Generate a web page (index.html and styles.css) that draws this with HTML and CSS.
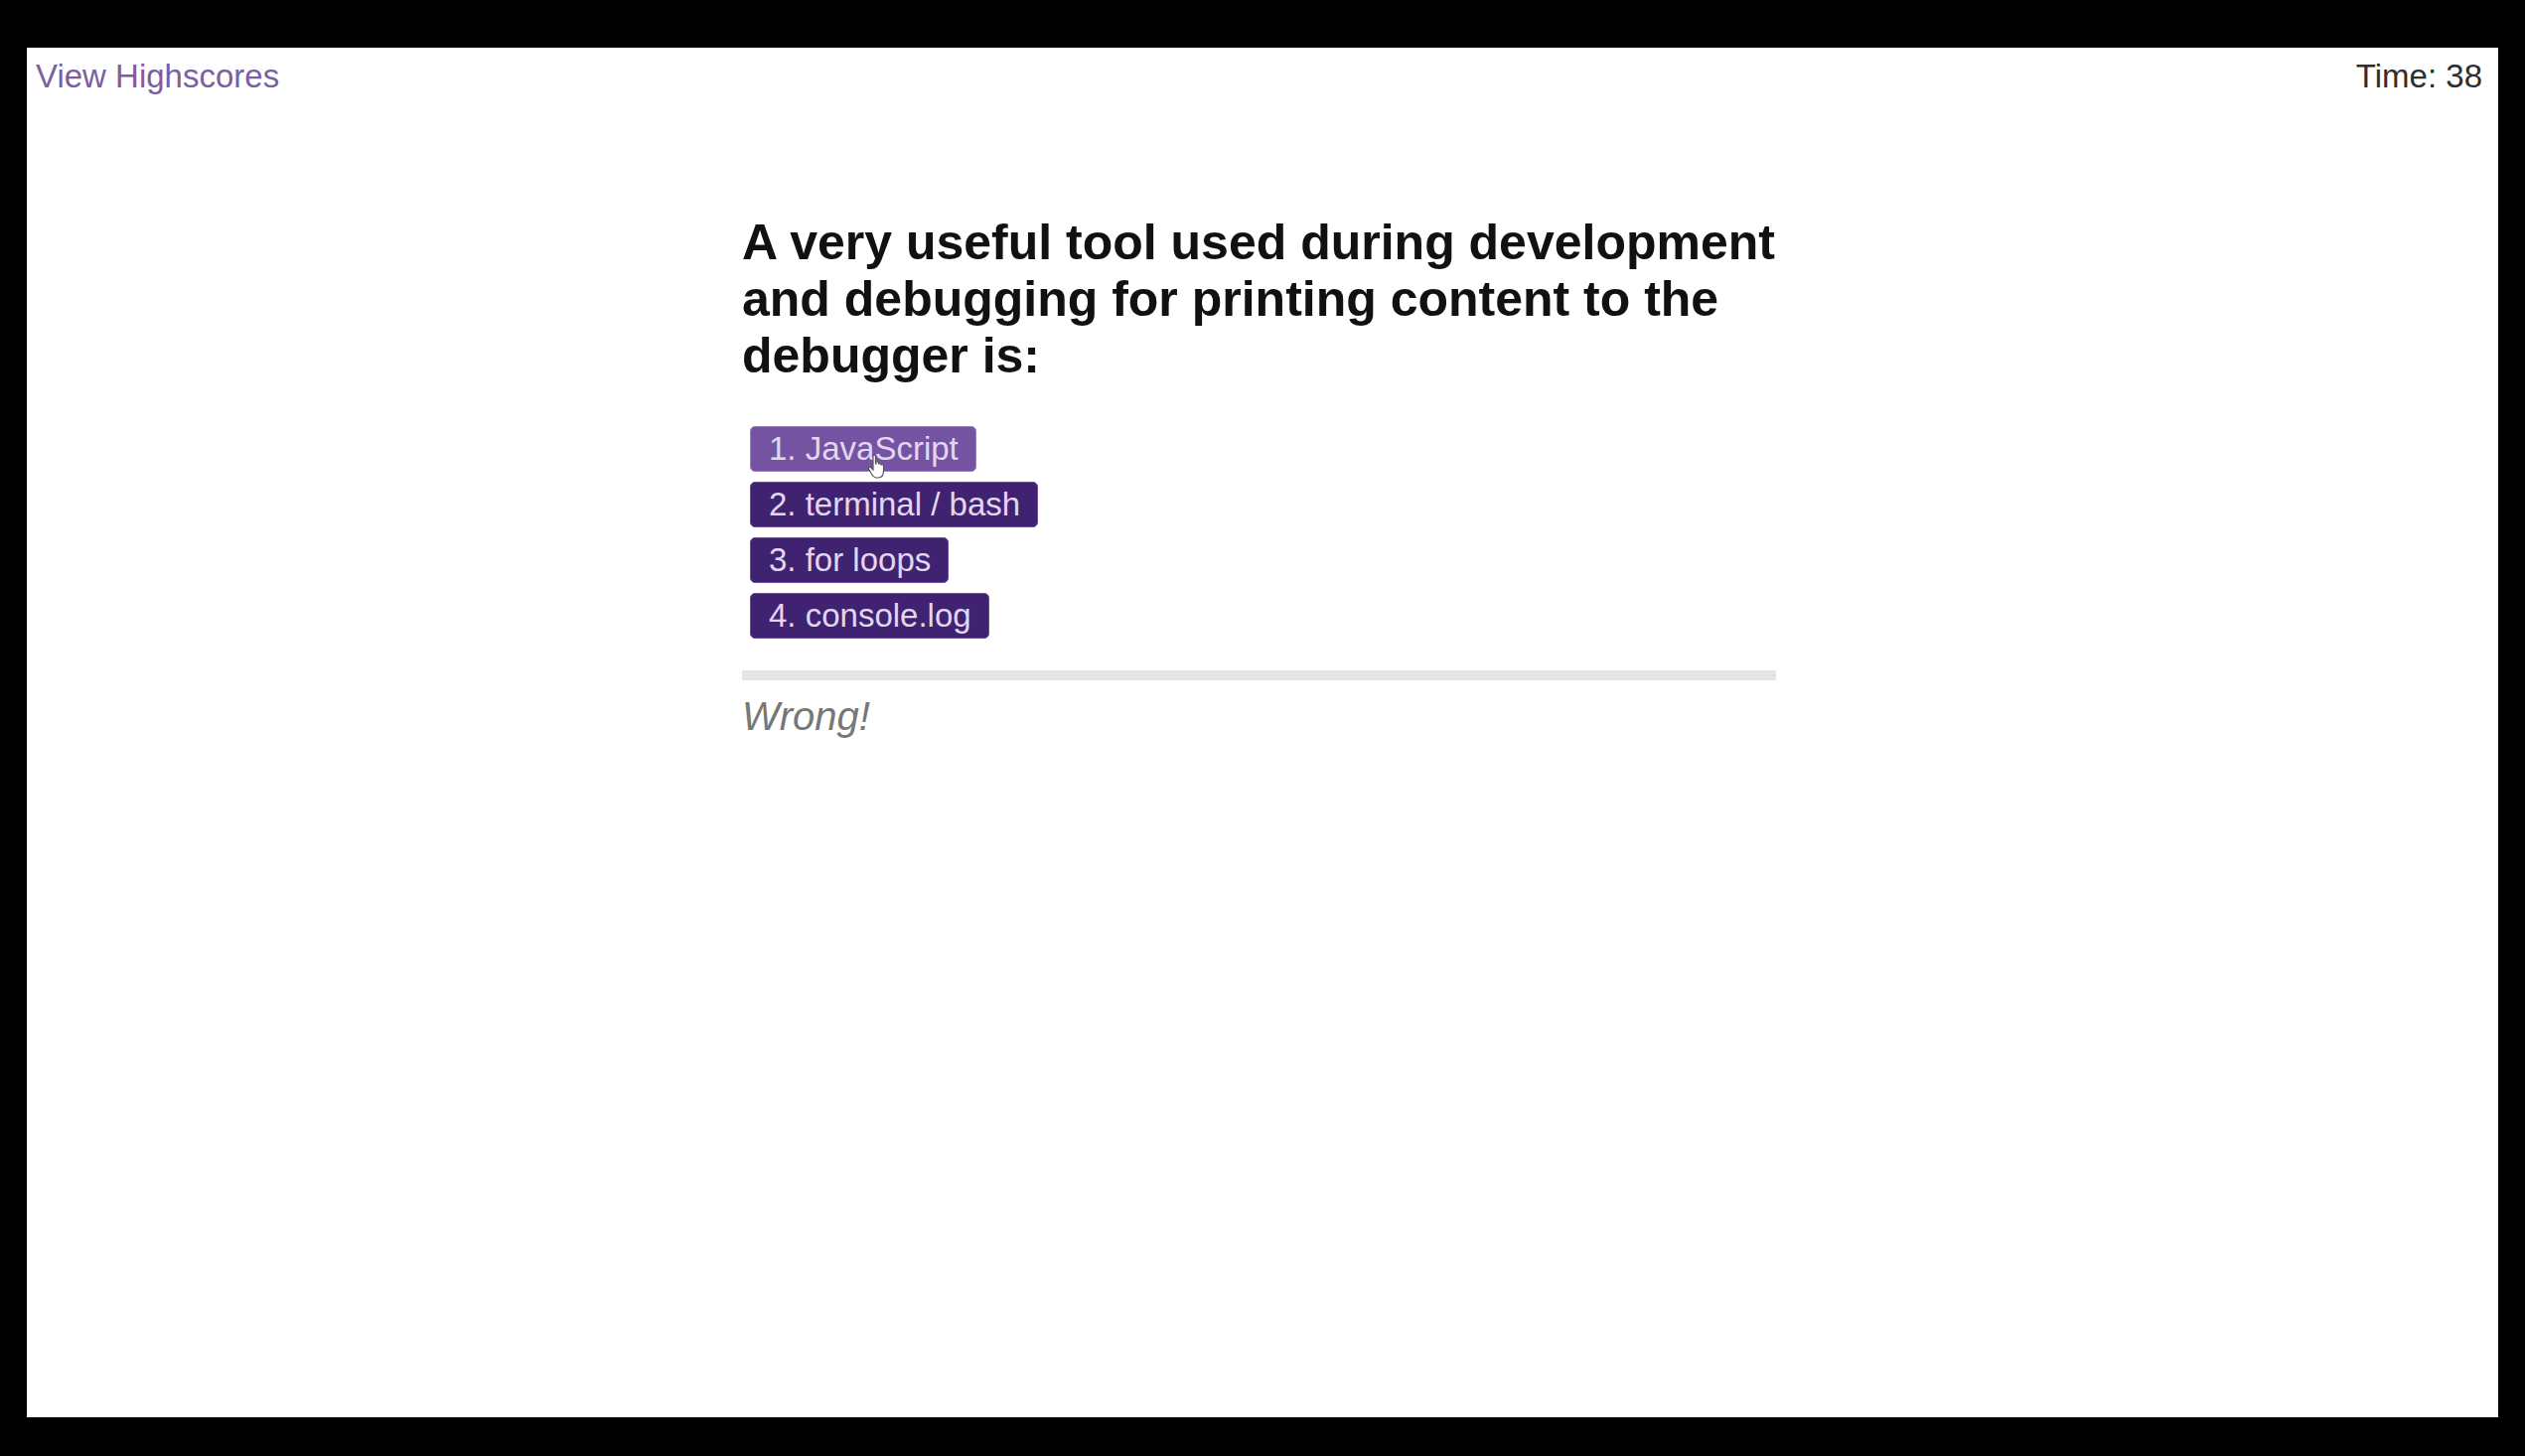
FILE: index.html
```html
<!DOCTYPE html>
<html lang="en">
<head>
<meta charset="utf-8">
<title>Code Quiz</title>
<link rel="stylesheet" href="styles.css">
</head>
<body>
<div class="screen">
  <header class="topbar">
    <a class="scores-link" href="#">View Highscores</a>
    <div class="timer">Time: 38</div>
  </header>
  <main class="quiz">
    <h1 class="question">A very useful tool used during development and debugging for printing content to the debugger is:</h1>
    <div class="choices">
      <div class="choice-wrap">
        <button class="choice choice-hover">1. JavaScript</button>
        <svg class="cursor" width="22" height="26" viewBox="0 0 22 26"><path d="M6 2 C6 0.8 8.5 0.8 8.5 2 L8.5 10 L9 10 L9 8.5 C9 7.3 11.5 7.3 11.5 8.5 L11.5 10.5 C11.5 9.3 14 9.3 14 10.5 L14 11.5 C14 10.3 16.5 10.3 16.5 11.5 L16.5 17 C16.5 21 14.5 24 11 24 L9.5 24 C7 24 5.5 22 4 19.5 L1.5 15 C0.8 13.8 2.4 12.6 3.5 13.6 L6 16 Z" fill="#fff" stroke="#555" stroke-width="1.2"/></svg>
      </div>
      <div class="choice-wrap"><button class="choice">2. terminal / bash</button></div>
      <div class="choice-wrap"><button class="choice">3. for loops</button></div>
      <div class="choice-wrap"><button class="choice">4. console.log</button></div>
    </div>
    <hr class="divider">
    <p class="feedback">Wrong!</p>
  </main>
</div>
</body>
</html>
```

FILE: styles.css
```css
html, body {
  margin: 0;
  padding: 0;
}

body {
  background: #000;
  padding: 48px 27px 39px 27px;
  font-family: "Liberation Sans", Arial, Helvetica, sans-serif;
}

.screen {
  background: #fff;
  height: 1379px;
  display: flex;
  flex-direction: column;
}

.topbar {
  display: flex;
  justify-content: space-between;
  align-items: flex-start;
  padding: 10px 16px 0 9px;
  font-size: 33px;
  line-height: 38px;
}

.scores-link {
  color: #7a5fa3;
  text-decoration: none;
}

.timer {
  color: #2e2e2e;
}

.quiz {
  width: 1041px;
  margin: 120px 0 0 720px;
  display: flex;
  flex-direction: column;
}

.question {
  margin: 0;
  font-size: 50px;
  line-height: 57px;
  font-weight: bold;
  color: #111;
}

.choices {
  margin-top: 42px;
  display: flex;
  flex-direction: column;
  gap: 10px;
  padding-left: 8px;
}

.choice-wrap {
  position: relative;
  display: flex;
}

.choice {
  font-family: "Liberation Sans", Arial, Helvetica, sans-serif;
  font-size: 33px;
  line-height: 36px;
  padding: 4px 17px 4px 18px;
  border: 1px solid #6a4f96;
  border-radius: 5px;
  background: #3f2270;
  color: #e2d6f2;
  cursor: pointer;
}

.choice-hover {
  background: #7454a2;
  border-color: #9a82c0;
}

.cursor {
  position: absolute;
  left: 118px;
  top: 28px;
}

.divider {
  margin: 32px 0 0 0;
  height: 10px;
  border: none;
  background: #e5e5e5;
}

.feedback {
  margin: 13px 0 0 0;
  font-size: 40px;
  line-height: 46px;
  font-style: italic;
  color: #777;
}
```
